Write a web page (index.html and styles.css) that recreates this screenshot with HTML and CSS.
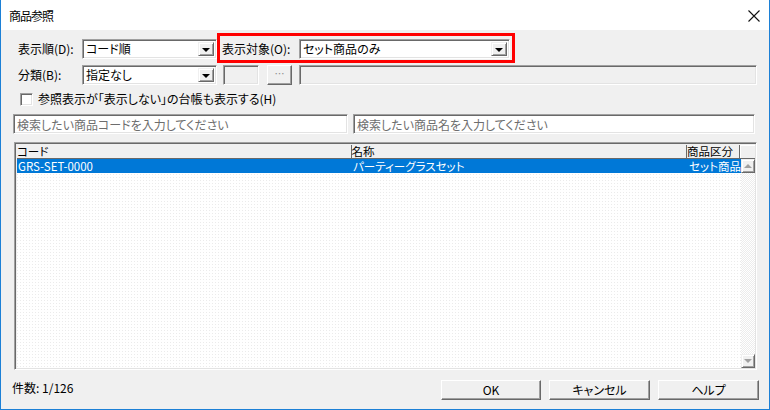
FILE: index.html
```html
<!DOCTYPE html>
<html lang="ja">
<head>
<meta charset="utf-8">
<title>商品参照</title>
<link rel="stylesheet" href="styles.css">
</head>
<body>
<div class="win">
  <div class="titlebar">
    <span class="title">商品参照</span>
    <svg class="close" width="12" height="12" viewBox="0 0 12 12"><path d="M0.5 0.5 L11.5 11.5 M11.5 0.5 L0.5 11.5" stroke="#111" stroke-width="1.1" fill="none"/></svg>
  </div>
  <div class="body">
    <div class="row r1">
      <span class="lbl lbl1">表示順(D):</span>
      <div class="combo c1"><span class="val">コード順</span><span class="dd"><i class="tri"></i></span></div>
      <div class="hl">
        <span class="lbl lbl2">表示対象(O):</span>
        <div class="combo c2"><span class="val">セット商品のみ</span><span class="dd"><i class="tri"></i></span></div>
      </div>
    </div>
    <div class="row r2">
      <span class="lbl lbl1">分類(B):</span>
      <div class="combo c1"><span class="val">指定なし</span><span class="dd"><i class="tri"></i></span></div>
      <div class="field dis small"></div>
      <div class="btn dots">…</div>
      <div class="field dis wide"></div>
    </div>
    <div class="row r3">
      <span class="check"></span>
      <span class="chklbl">参照表示が「表示しない」の台帳も表示する(H)</span>
    </div>
    <div class="row r4">
      <div class="field search s1">検索したい商品コードを入力してください</div>
      <div class="field search s2">検索したい商品名を入力してください</div>
    </div>
    <div class="grid">
      <div class="ghead">
        <div class="hc col1"><span class="ht">コード</span></div>
        <div class="hc col2"><span class="ht">名称</span></div>
        <div class="hc col3"><span class="ht">商品区分</span></div>
        <div class="hc col4"></div>
      </div>
      <div class="gbody">
        <div class="rows">
          <div class="grow sel">
            <div class="cell col1">GRS-SET-0000</div>
            <div class="cell col2">パーティーグラスセット</div>
            <div class="cell col3 right">セット商品</div>
          </div>
        </div>
        <div class="vscroll">
          <div class="sbtn"><i class="up"></i></div>
          <div class="track"></div>
          <div class="sbtn"><i class="down"></i></div>
        </div>
      </div>
    </div>
    <div class="footer">
      <span class="count">件数: 1/126</span>
      <div class="btns">
        <div class="btn pb ok">OK</div>
        <div class="btn pb cancel">キャンセル</div>
        <div class="btn pb help">ヘルプ</div>
      </div>
    </div>
  </div>
</div>
</body>
</html>
```

FILE: styles.css
```css
* { box-sizing: border-box; }
html, body { margin: 0; padding: 0; }
body {
  width: 770px;
  height: 410px;
  font-family: "Noto Sans CJK JP", "Noto Sans", sans-serif;
  font-size: 12px;
  font-feature-settings: "palt";
  color: #000;
  background: #fff;
  overflow: hidden;
}
.win {
  width: 770px;
  height: 410px;
  border: 1px solid #1c80d6;
  border-top: none;
  display: flex;
  flex-direction: column;
  background: #f0f0f0;
}
.titlebar {
  height: 30px;
  background: #fff;
  display: flex;
  align-items: center;
  justify-content: space-between;
  padding: 0 9px 0 8px;
  flex: none;
}
.title {
  font-size: 12px;
  line-height: 14px;
  letter-spacing: -1px;
  margin-top: 1px;
}
.close { display: block; margin-top: 1px; }
.body {
  flex: 1;
  display: flex;
  flex-direction: column;
  background: #f0f0f0;
}
.row { display: flex; flex: none; }
.lbl { line-height: 20px; white-space: nowrap; }
.r1 {
  margin-top: 3px;
  padding-left: 17px;
  align-items: flex-start;
}
.r1 > .lbl1, .r1 > .combo { margin-top: 6px; }
.lbl1 { width: 64px; }
.lbl2 { width: 77px; }
.hl {
  display: flex;
  border: 3px solid #ff0000;
  padding: 3px 2px 1px 2px;
}
.combo {
  height: 20px;
  background: #fff;
  border: 1px solid;
  border-color: #a0a0a0 #fff #fff #a0a0a0;
  box-shadow: inset 1px 1px 0 #696969, inset -1px -1px 0 #e3e3e3;
  display: flex;
  align-items: stretch;
  padding: 1px 2px 1px 1px;
}
.c1 { width: 135px; }
.c2 { width: 211px; }
.combo .val {
  flex: 1;
  line-height: 16px;
  padding-left: 2px;
  white-space: nowrap;
  overflow: hidden;
}
.dd {
  width: 16px;
  flex: none;
  margin: 1px 0;
  background: #f0f0f0;
  border: 1px solid;
  border-color: #f0f0f0 #696969 #696969 #f0f0f0;
  box-shadow: inset 1px 1px 0 #fff, inset -1px -1px 0 #a0a0a0;
  display: flex;
  align-items: center;
  justify-content: center;
}
.tri {
  width: 0; height: 0;
  border-left: 4px solid transparent;
  border-right: 4px solid transparent;
  border-top: 4px solid #000;
  margin-top: 1px;
}
.r2 {
  margin-top: 2px;
  padding-left: 17px;
  height: 20px;
}
.field {
  height: 20px;
  border: 1px solid;
  border-color: #a0a0a0 #fff #fff #a0a0a0;
  box-shadow: inset 1px 1px 0 #696969, inset -1px -1px 0 #e3e3e3;
  background: #fff;
}
.dis { background: #f0f0f0; }
.small { width: 36px; margin-left: 6px; }
.wide { width: 458px; margin-left: 7px; }
.btn {
  background: #f0f0f0;
  border: 1px solid;
  border-color: #fff #696969 #696969 #fff;
  box-shadow: inset -1px -1px 0 #a0a0a0;
  display: flex;
  align-items: center;
  justify-content: center;
  line-height: 16px;
}
.dots {
  width: 25px;
  height: 20px;
  margin-left: 8px;
  color: #8a8a8a;
  font-size: 10px;
  padding-bottom: 2px;
}
.r3 {
  margin-top: 4px;
  height: 20px;
  align-items: center;
  padding-left: 19px;
}
.check {
  width: 13px;
  height: 13px;
  background: #fff;
  border: 1px solid;
  border-color: #a0a0a0 #fff #fff #a0a0a0;
  box-shadow: inset 1px 1px 0 #696969, inset -1px -1px 0 #e3e3e3;
  flex: none;
}
.chklbl { margin-left: 5px; line-height: 16px; white-space: nowrap; }
.r4 {
  margin-top: 5px;
  padding-left: 12px;
}
.search {
  color: #6d6d6d;
  padding: 1px 3px;
  line-height: 17px;
  white-space: nowrap;
  overflow: hidden;
}
.s1 { width: 335px; }
.s2 { width: 402px; margin-left: 5px; }
.grid {
  margin: 8px 0 0 13px;
  width: 743px;
  height: 228px;
  border: 1px solid;
  border-color: #a0a0a0 #fff #fff #a0a0a0;
  box-shadow: inset 1px 1px 0 #696969, inset -1px -1px 0 #e3e3e3;
  padding: 2px 1px 1px 2px;
  display: flex;
  flex-direction: column;
  flex: none;
  font-size: 11.5px;
}
.ghead { display: flex; height: 14px; flex: none; }
.hc {
  height: 14px;
  background: #f0f0f0;
  border-right: 1px solid #696969;
  border-bottom: 1px solid #696969;
  display: flex;
  align-items: center;
  white-space: nowrap;
}
.ht { line-height: 13px; display: block; }
.col1 { width: 335px; }
.col2 { width: 336px; }
.col3 { width: 53px; }
.col4 { width: 15px; border-right: none; box-shadow: inset 1px 1px 0 #fff; }
.gbody { flex: 1; display: flex; min-height: 0; }
.rows {
  width: 724px;
  background-color: #fff;
  background-image: conic-gradient(from 270deg at 1px 1px, #ebebeb 90deg, #fff 0);
  background-size: 3px 3px;
}
.grow { display: flex; height: 14px; }
.sel { background: #0078d7; color: #fff; }
.cell {
  line-height: 14px;
  white-space: nowrap;
  overflow: hidden;
}
.grow .col1, .grow .col2 { padding-left: 1px; }
.right { text-align: right; }
.vscroll {
  width: 15px;
  display: flex;
  flex-direction: column;
}
.sbtn {
  height: 14px;
  background: #f0f0f0;
  border: 1px solid;
  border-color: #f0f0f0 #696969 #696969 #f0f0f0;
  box-shadow: inset 1px 1px 0 #fff, inset -1px -1px 0 #a0a0a0;
  display: flex;
  align-items: center;
  justify-content: center;
  flex: none;
}
.up, .down {
  width: 0; height: 0;
  border-left: 4px solid transparent;
  border-right: 4px solid transparent;
}
.up { border-bottom: 4px solid #a0a0a0; }
.down { border-top: 4px solid #a0a0a0; }
.track {
  flex: 1;
  background: repeating-conic-gradient(#ececec 0 25%, #fff 0 50%) 0 0 / 2px 2px;
}
.footer {
  margin-top: 10px;
  padding-left: 11px;
  display: flex;
  align-items: flex-start;
  justify-content: space-between;
  padding-right: 10px;
}
.count { line-height: 16px; }
.btns { display: flex; gap: 8px; }
.pb { height: 20px; }
.ok { width: 100px; }
.cancel { width: 101px; }
.help { width: 101px; }
```
